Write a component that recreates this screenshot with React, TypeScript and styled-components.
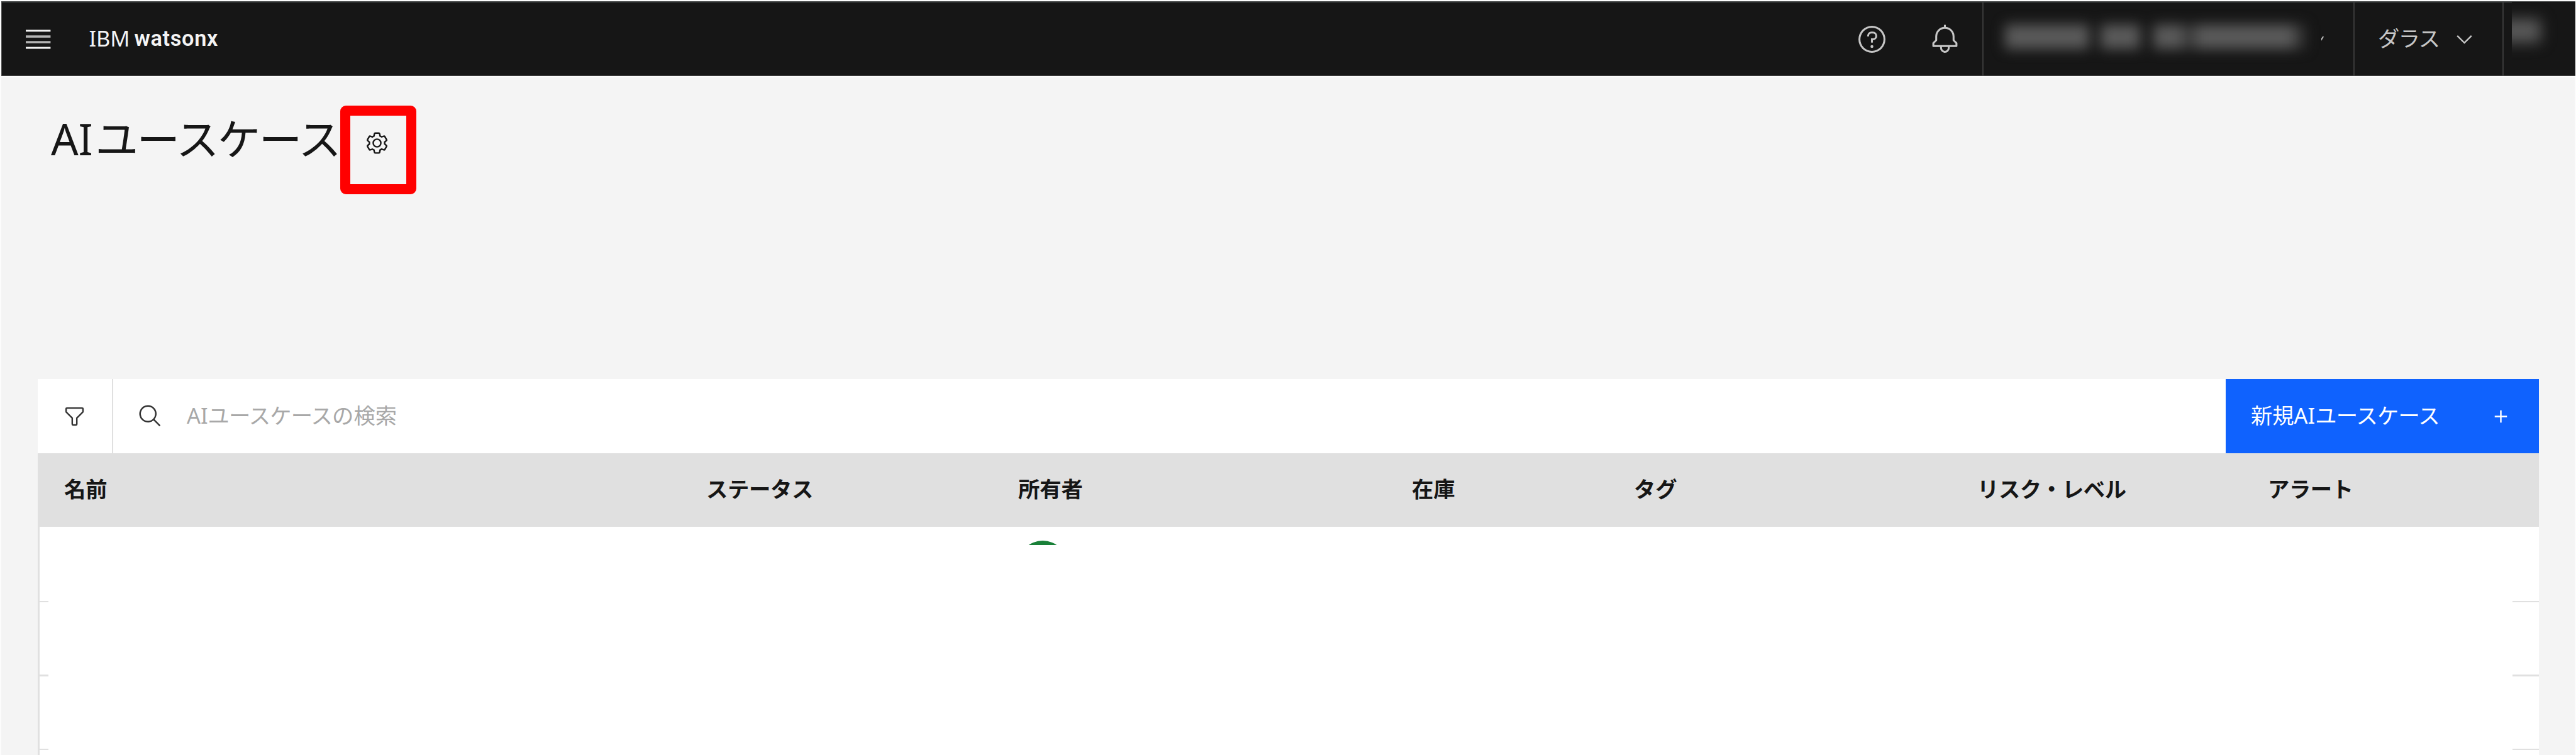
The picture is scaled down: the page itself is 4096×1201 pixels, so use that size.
import React from "react";
import styled, { createGlobalStyle } from "styled-components";

const colors = {
  ink: "#161616",
  toolIcon: "#333333",
  header: "#161616",
  headerLine: "#393939",
  headerIcon: "#c6c6c6",
  page: "#f4f4f4",
  line: "#e0e0e0",
  placeholder: "#a8a8a8",
  primary: "#0f62fe",
  success: "#198038",
  highlight: "#ff0000",
};

const GlobalStyle = createGlobalStyle`
  *, *::before, *::after { box-sizing: border-box; }
  body {
    margin: 0;
    background: #ffffff;
    color: ${colors.ink};
    font-family: "Noto Sans", "Noto Sans CJK JP", sans-serif;
    font-size: 34.3px;
    line-height: 48px;
    overflow: hidden;
  }
  svg { display: block; flex: none; }
`;

const Page = styled.div`
  width: 4096px;
  height: 1201px;
  padding: 2px 2px 0;
  display: flex;
  flex-direction: column;
  background: #fcfcfc;
  overflow: hidden;
`;

/* ---------- global header ---------- */

const Header = styled.header`
  flex: none;
  width: 4093px;
  height: 119px;
  display: flex;
  align-items: stretch;
  background: ${colors.header};
  border-top: 2px solid #3d4040;
  border-left: 1px solid #4a4a4a;
  border-bottom: 1px solid #4a4a4a;
  color: ${colors.headerIcon};
`;

const MenuButton = styled.div`
  width: 117px;
  padding-left: 38px;
  display: flex;
  align-items: center;
`;

const Brand = styled.div`
  flex: 1;
  display: flex;
  align-items: center;
  color: #f4f4f4;
  padding: 0 0 2px 21.4px;
  white-space: pre;
`;

const BrandPrefix = styled.span`
  width: 72px;
`;

const BrandName = styled.span`
  font-family: Roboto, sans-serif;
  font-weight: 600;
  letter-spacing: 0.7px;
  padding-bottom: 1px;
`;

const HeaderActions = styled.div`
  display: flex;
  align-items: center;
  gap: 67px;
  padding-right: 35px;
`;

const HeaderCell = styled.div<{ $width: number }>`
  flex: none;
  width: ${(p) => p.$width}px;
  display: flex;
  align-items: center;
  border-left: 2px solid ${colors.headerLine};
`;

const Redacted = styled.div`
  flex: none;
  display: flex;
  align-items: center;
  width: 506px;
  padding-left: 34px;
  height: 115px;
  padding-bottom: 7px;
  filter: blur(10px);
`;

const Smudge = styled.i<{ $width: number; $gap?: number; $tone?: string }>`
  flex: none;
  width: ${(p) => p.$width}px;
  height: 39px;
  margin-left: ${(p) => p.$gap ?? 0}px;
  background: ${(p) => p.$tone ?? "#5a5a5a"};
`;

const AccountCaret = styled.span`
  width: 4px;
  height: 8px;
  margin: 0 0 3px 31px;
  overflow: hidden;
`;

const RegionName = styled.span`
  width: 118px;
  margin-left: 37px;
  padding-bottom: 3px;
  letter-spacing: -1.6px;
  white-space: nowrap;
`;

const ProfileMask = styled.div`
  width: 102px;
  height: 117px;
  margin: -2px 0 0 13px;
  background: ${colors.header};
  overflow: hidden;
`;

const ProfileSmudge = styled.div`
  width: 66px;
  height: 38px;
  margin: 27px 0 0 -20px;
  background: #585858;
  filter: blur(11px);
`;

/* ---------- page title ---------- */

const Main = styled.main`
  flex: 1;
  width: 4092px;
  margin-top: 2px;
  padding: 45px 57px 0 58px;
  background: ${colors.page};
  display: flex;
  flex-direction: column;
`;

const TitleRow = styled.div`
  flex: none;
  height: 435px;
  display: flex;
  align-items: flex-start;
  padding-left: 21px;
`;

const Title = styled.h1`
  margin: 0;
  width: 460px;
  font-size: 68.5px;
  line-height: 106px;
  font-weight: 400;
  letter-spacing: -2.6px;
  white-space: nowrap;
`;

const TitleLatin = styled.span`
  letter-spacing: -0.2px;
  margin-right: 4px;
`;

const SettingsHighlight = styled.div`
  width: 121px;
  height: 141px;
  border: 16px solid ${colors.highlight};
  border-radius: 9px;
  padding: 24px 0 0 23px;
`;

/* ---------- toolbar ---------- */

const Toolbar = styled.div`
  flex: none;
  height: 118px;
  display: flex;
  background: #ffffff;
`;

const FilterButton = styled.div`
  width: 120px;
  padding-left: 39px;
  display: flex;
  align-items: center;
  border-right: 2px solid ${colors.line};
`;

const SearchField = styled.div`
  flex: 1;
  display: flex;
  align-items: center;
  padding-left: 39px;
`;

const Placeholder = styled.span`
  margin-left: 38px;
  padding-bottom: 2px;
  color: ${colors.placeholder};
  white-space: nowrap;
`;

const Tight = styled.span`
  letter-spacing: -0.8px;
`;

const NewButton = styled.div`
  width: 498px;
  padding: 0 41px 0 40px;
  display: flex;
  align-items: center;
  justify-content: space-between;
  background: ${colors.primary};
  color: #ffffff;
  white-space: nowrap;
`;

const NewLabel = styled.span`
  padding-bottom: 2px;
`;

/* ---------- table ---------- */

const TableHead = styled.div`
  flex: none;
  height: 117px;
  padding: 0 0 3px 42px;
  display: grid;
  grid-template-columns: 1021px 496px 626px 353px 546px 462px 1fr;
  align-items: center;
  background: ${colors.line};
  font-weight: 600;
  white-space: nowrap;
`;

const ColumnLabel = styled.span<{ $tracking?: number }>`
  letter-spacing: ${(p) => p.$tracking ?? 0}px;
`;

const TableBody = styled.div`
  flex: 1;
  background: #ffffff;
  border-left: 3px solid ${colors.line};
`;

const Row = styled.div<{ $height: number }>`
  height: ${(p) => p.$height}px;
  display: flex;
  align-items: flex-end;
`;

const RowRule = styled.span<{ $width: number }>`
  width: ${(p) => p.$width}px;
  height: 2.5px;
  background: ${colors.line};
  &:last-child { margin-left: auto; }
`;

const OwnerClip = styled.div`
  align-self: flex-start;
  width: 78px;
  height: 7px;
  margin: 21.5px 0 0 1542px;
  overflow: hidden;
`;

const OwnerAvatar = styled.div`
  width: 78px;
  height: 78px;
  border-radius: 50%;
  background: ${colors.success};
`;

/* ---------- icons ---------- */

type IconProps = { size: number; fill?: string; children: React.ReactNode };
const Icon = ({ size, fill = colors.ink, children }: IconProps) => (
  <svg width={size} height={size} viewBox="0 0 32 32" fill={fill}>
    {children}
  </svg>
);

const MenuIcon = () => (
  <svg width="40" height="31" viewBox="0 0 40 31">
    <rect x="0" y="0.4" width="39.4" height="3" fill="#f0f0f0" />
    <rect x="0" y="9.3" width="39.4" height="3.6" fill="#b4b4b4" />
    <rect x="0" y="18.3" width="39.4" height="3.6" fill="#b4b4b4" />
    <rect x="0" y="27.6" width="39.4" height="3" fill="#f0f0f0" />
  </svg>
);

const HelpIcon = () => (
  <Icon size={49} fill={colors.headerIcon}>
    <path d="M16 2A14 14 0 1 0 30 16 14 14 0 0 0 16 2Zm0 26A12 12 0 1 1 28 16 12 12 0 0 1 16 28Z" />
    <circle cx="16" cy="23.5" r="1.5" />
    <path d="M17 8H15.5A4.49 4.49 0 0 0 11 12.5V13h2v-.5A2.5 2.5 0 0 1 15.5 10H17a2.5 2.5 0 0 1 0 5H15v4.5h2V17a4.5 4.5 0 0 0 0-9Z" />
  </Icon>
);

const BellIcon = () => (
  <Icon size={49} fill={colors.headerIcon}>
    <path d="M28.707 19.293 26 16.586V13a10.014 10.014 0 0 0-9-9.95V1H15V3.05A10.014 10.014 0 0 0 6 13v3.586L3.293 19.293A1 1 0 0 0 3 20v3a1 1 0 0 0 1 1h7v.777a5.152 5.152 0 0 0 4.5 5.199A5.006 5.006 0 0 0 21 25V24h7a1 1 0 0 0 1-1V20a1 1 0 0 0-.293-.707ZM19 25a3 3 0 0 1-6 0V24h6Zm8-3H5V20.414L7.707 17.707A1 1 0 0 0 8 17V13a8 8 0 0 1 16 0v4a1 1 0 0 0 .293.707L27 20.414Z" />
  </Icon>
);

const ChevronIcon = () => (
  <svg width="39" height="39" viewBox="0 0 16 16" fill={colors.headerIcon}>
    <path d="M8 11 3 6 3.7 5.3 8 9.6 12.3 5.3 13 6Z" />
  </svg>
);

const CaretTip = () => (
  <svg width="4" height="8" viewBox="0 0 4 8" fill="#c0c0c0">
    <path d="M0 4 2.6 0.6 4 1.6 0.4 7.4 0 7.4Z" />
  </svg>
);

const SettingsIcon = () => (
  <Icon size={39}>
    <path d="M27 16.76c0-.25 0-.5 0-.76s0-.51 0-.77l1.92-1.68A2 2 0 0 0 29.3 11L26.94 7a2 2 0 0 0-1.73-1 2 2 0 0 0-.64.1l-2.43.82a11.35 11.35 0 0 0-1.31-.75l-.51-2.52a2 2 0 0 0-2-1.61H13.64a2 2 0 0 0-2 1.61l-.51 2.52a11.48 11.48 0 0 0-1.32.75L7.43 6.06A2 2 0 0 0 6.79 6 2 2 0 0 0 5.06 7L2.7 11a2 2 0 0 0 .41 2.51L5 15.24c0 .25 0 .5 0 .76s0 .51 0 .77L3.11 18.45A2 2 0 0 0 2.7 21L5.06 25a2 2 0 0 0 1.73 1 2 2 0 0 0 .64-.1l2.43-.82a11.35 11.35 0 0 0 1.31.75l.51 2.52a2 2 0 0 0 2 1.61h4.72a2 2 0 0 0 2-1.61l.51-2.52a11.48 11.48 0 0 0 1.32-.75l2.42.82a2 2 0 0 0 .64.1 2 2 0 0 0 1.73-1L29.3 21a2 2 0 0 0-.41-2.51ZM25.21 24l-3.43-1.16a8.86 8.86 0 0 1-2.71 1.57L18.36 28H13.64l-.71-3.55a9.36 9.36 0 0 1-2.7-1.57L6.79 24 4.43 20l2.72-2.4a8.9 8.9 0 0 1 0-3.13L4.43 12 6.79 8l3.43 1.16a8.86 8.86 0 0 1 2.71-1.57L13.64 4h4.72l.71 3.55a9.36 9.36 0 0 1 2.7 1.57L25.21 8 27.57 12l-2.72 2.4a8.9 8.9 0 0 1 0 3.13L27.57 20Z" />
    <path d="M16 22a6 6 0 1 1 6-6A5.94 5.94 0 0 1 16 22Zm0-10a3.91 3.91 0 0 0-4 4 3.91 3.91 0 0 0 4 4 3.91 3.91 0 0 0 4-4A3.91 3.91 0 0 0 16 12Z" />
  </Icon>
);

const FilterIcon = () => (
  <Icon size={39} fill={colors.toolIcon}>
    <path d="M18 28H14a2 2 0 0 1-2-2V18.41L4.59 11A2 2 0 0 1 4 9.59V6A2 2 0 0 1 6 4H26a2 2 0 0 1 2 2V9.59A2 2 0 0 1 27.41 11L20 18.41V26A2 2 0 0 1 18 28ZM6 6V9.59l8 8V26h4V17.59l8-8V6Z" />
  </Icon>
);

const SearchIcon = () => (
  <Icon size={40} fill={colors.toolIcon}>
    <path d="M29 27.586l-7.552-7.552a11.018 11.018 0 1 0-1.414 1.414L27.586 29ZM4 13a9 9 0 1 1 9 9A9.01 9.01 0 0 1 4 13Z" />
  </Icon>
);

const AddIcon = () => (
  <Icon size={39} fill="#ffffff">
    <path d="M17 15V8H15v7H8v2h7v7h2V17h7V15Z" />
  </Icon>
);

/* ---------- data ---------- */

const columns = [
  { label: "名前" },
  { label: "ステータス", tracking: -0.3 },
  { label: "所有者" },
  { label: "在庫" },
  { label: "タグ" },
  { label: "リスク・レベル", tracking: -0.4 },
  { label: "アラート", tracking: -0.4 },
];

const rows = [
  { height: 120, owner: true },
  { height: 117.5, owner: false },
  { height: 117.5, owner: false },
];

export default function App() {
  return (
    <Page>
      <GlobalStyle />
      <Header>
        <MenuButton>
          <MenuIcon />
        </MenuButton>
        <Brand>
          <BrandPrefix>IBM </BrandPrefix>
          <BrandName>watsonx</BrandName>
        </Brand>
        <HeaderActions>
          <HelpIcon />
          <BellIcon />
        </HeaderActions>
        <HeaderCell $width={590}>
          <Redacted>
            <Smudge $width={134} />
            <Smudge $width={63} $gap={18} />
            <Smudge $width={46} $gap={21} />
            <Smudge $width={22} $tone="#3c3c3c" />
            <Smudge $width={156} />
            <Smudge $width={18} $tone="#343434" />
          </Redacted>
          <AccountCaret>
            <CaretTip />
          </AccountCaret>
        </HeaderCell>
        <HeaderCell $width={237}>
          <RegionName>ダラス</RegionName>
          <ChevronIcon />
        </HeaderCell>
        <HeaderCell $width={116}>
          <ProfileMask>
            <ProfileSmudge />
          </ProfileMask>
        </HeaderCell>
      </Header>
      <Main>
        <TitleRow>
          <Title>
            <TitleLatin>AI</TitleLatin>
            ユースケース
          </Title>
          <SettingsHighlight>
            <SettingsIcon />
          </SettingsHighlight>
        </TitleRow>
        <Toolbar>
          <FilterButton>
            <FilterIcon />
          </FilterButton>
          <SearchField>
            <SearchIcon />
            <Placeholder>
              AI<Tight>ユースケース</Tight>の検索
            </Placeholder>
          </SearchField>
          <NewButton>
            <NewLabel>
              新規AI<Tight>ユースケース</Tight>
            </NewLabel>
            <AddIcon />
          </NewButton>
        </Toolbar>
        <TableHead>
          {columns.map((c) => (
            <ColumnLabel key={c.label} $tracking={c.tracking}>
              {c.label}
            </ColumnLabel>
          ))}
        </TableHead>
        <TableBody>
          {rows.map((row, i) => (
            <Row key={i} $height={row.height}>
              <RowRule $width={14} />
              {row.owner && (
                <OwnerClip>
                  <OwnerAvatar />
                </OwnerClip>
              )}
              <RowRule $width={42} />
            </Row>
          ))}
        </TableBody>
      </Main>
    </Page>
  );
}
